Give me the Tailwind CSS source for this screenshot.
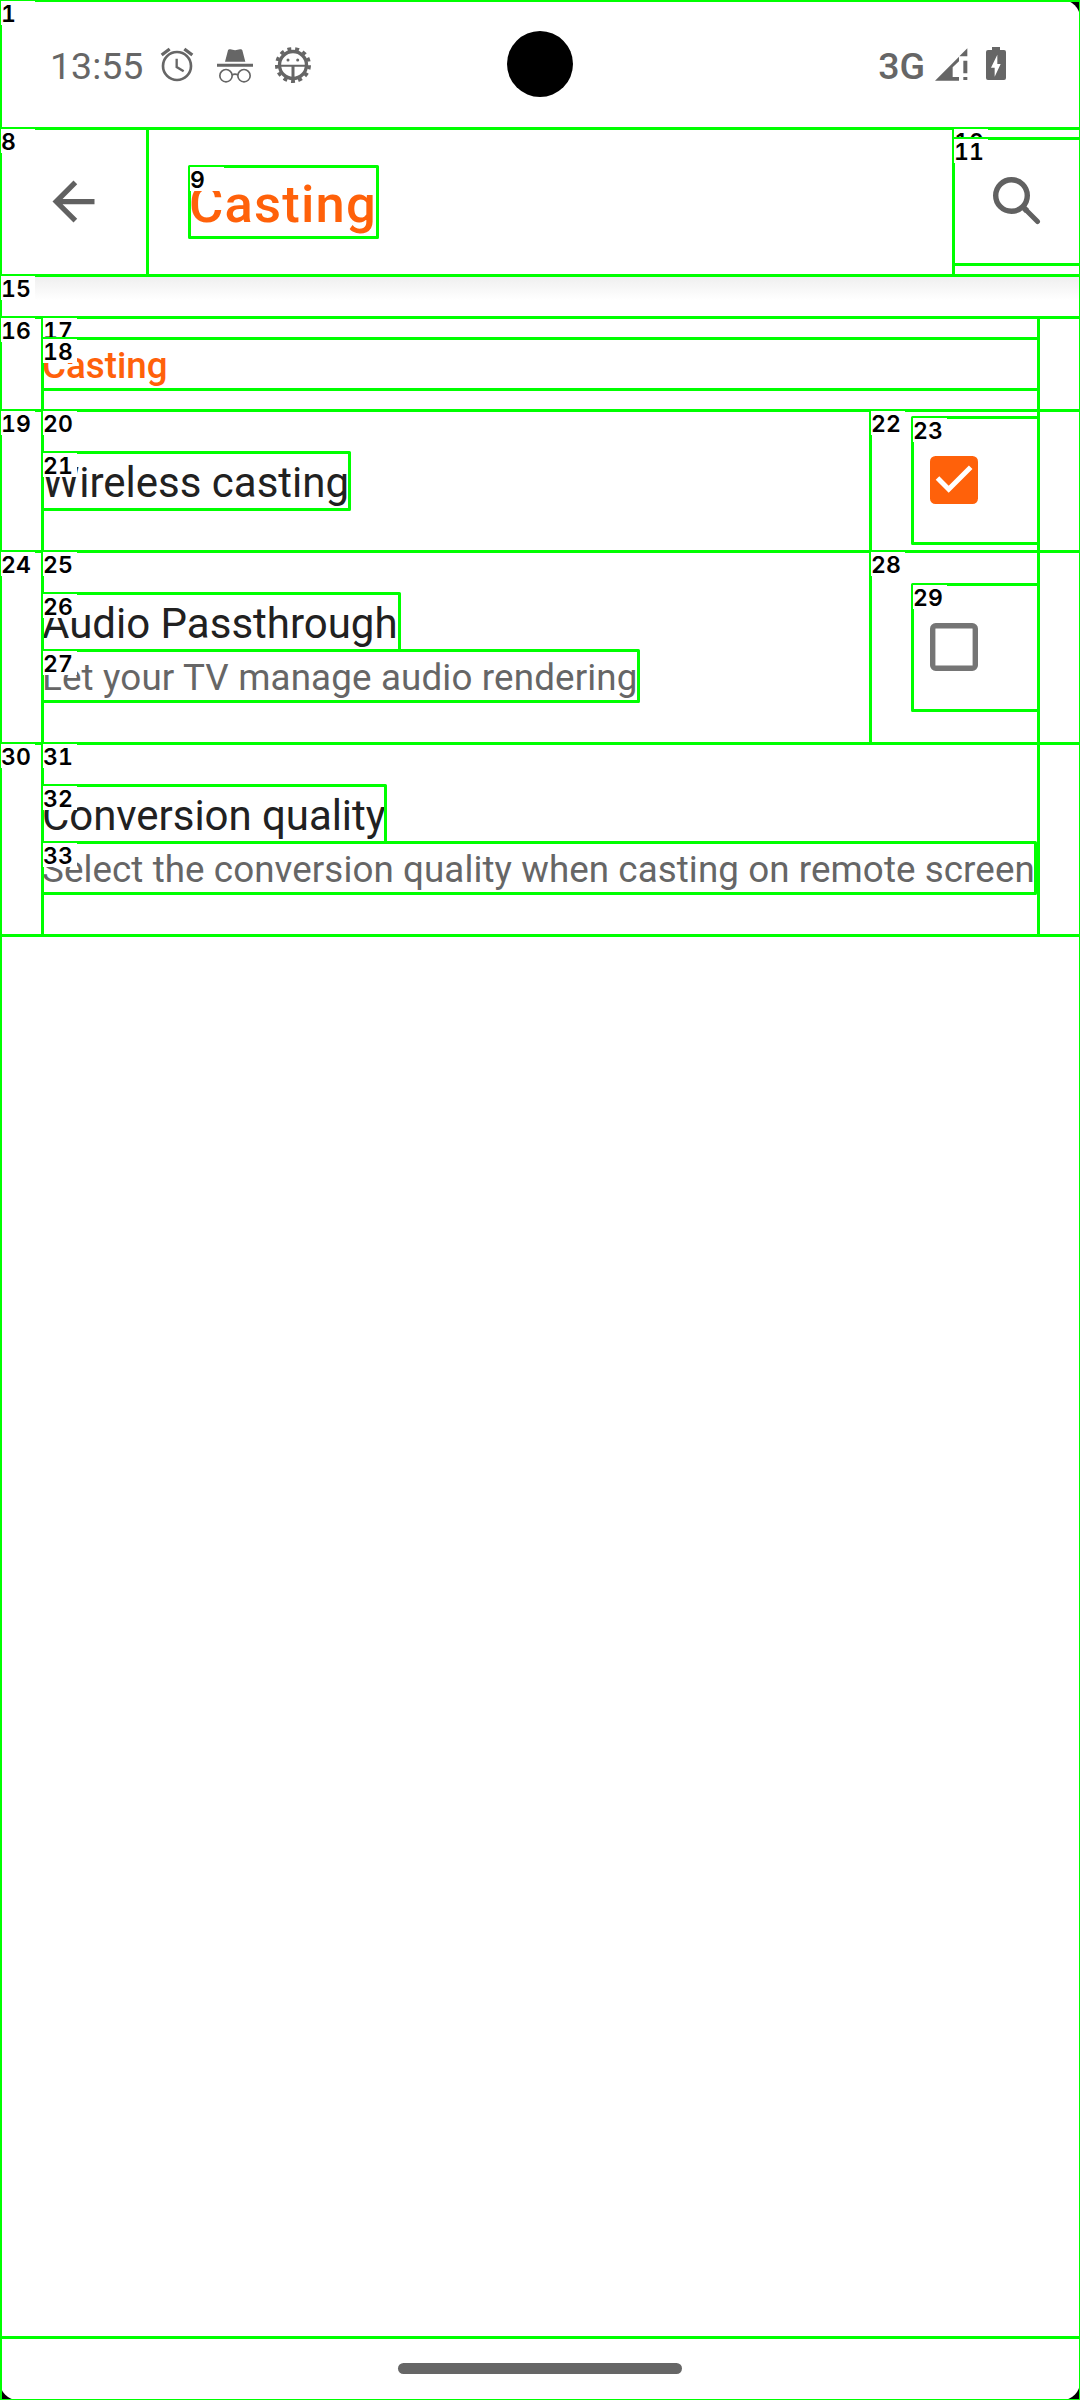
<!DOCTYPE html>
<html lang="en">
<head>
<meta charset="utf-8">
<title>Casting</title>
<script src="https://cdn.jsdelivr.net/npm/@tailwindcss/browser@4"></script>
</head>
<body class="bg-black">
<div class="relative flex flex-col w-[1080px] h-[2400px] overflow-hidden bg-white rounded-[18px] font-[Roboto,sans-serif] text-[#212121]">

  <!-- status bar -->
  <header class="flex h-32 shrink-0 items-center justify-between pl-[50px] pr-[74px] text-[#666666]">
    <div class="flex items-center">
      <span class="text-[37.5px] leading-[44px] mt-1">13:55</span>
      <svg class="ml-[17px] mt-[2px] w-[34px] h-[36px]" viewBox="480 141 102 108" fill="none" stroke="currentColor">
        <circle cx="531" cy="198" r="42" stroke-width="8"/>
        <path d="M530 176v25l21 13" stroke-width="7"/>
        <path d="M485 165l24-18M577 165l-24-18" stroke-width="10"/>
      </svg>
      <svg class="ml-[22px] mt-1 w-[38px] h-[36px]" viewBox="648 144 114 108" fill="currentColor">
        <path d="M675 185l9-34q2-5 7-3 14 5 29 0 5-2 7 3l9 34zM651 191h108v9H651z"/>
        <g fill="none" stroke="currentColor" stroke-width="5"><circle cx="678" cy="227" r="18.500"/><circle cx="732" cy="227" r="18.500"/><path d="M696 225q9-5 18 0"/></g>
      </svg>
      <svg class="ml-[20px] mt-px w-[38px] h-[38px]" viewBox="-57 -57 114 114" fill="currentColor">
        <circle r="40.500" fill="none" stroke="currentColor" stroke-width="10"/>
        <circle r="49" fill="none" stroke="currentColor" stroke-width="10" pathLength="26" stroke-dasharray="1 1" transform="rotate(83.08)"/>
        <path d="M-38 -1h76v6h-76zM-4.500 2h9v36h-9z"/>
        <circle cx="-15" cy="-15" r="4.500"/><circle cx="14" cy="-15" r="4.500"/>
      </svg>
    </div>
    <div class="flex items-center">
      <span class="mt-[3px] text-[37.5px] leading-[44px] font-medium">3G</span>
      <svg class="ml-[10px] w-[33px] h-[33px]" viewBox="284 142 99 99" fill="currentColor">
        <path d="M284 240l72-72v14l-19 18v29h19v11zM381 143v24h-24zM369 180h12v38h-12zM369 229h12v9h-12z"/>
      </svg>
      <svg class="ml-[18px] -mt-px w-[20px] h-[33px]" viewBox="438 141 60 99" fill="currentColor">
        <path fill-rule="evenodd" d="M456 141h24v9h12q6 0 6 6v78q0 6-6 6h-48q-6 0-6-6v-78q0-6 6-6h12zM472 164l-19 39h11v27l18-38h-10z"/>
      </svg>
    </div>
  </header>

  <!-- app bar -->
  <div class="flex h-[147px] shrink-0 items-center pl-[42px] pr-[39px] text-[#616161]">
    <svg class="w-[63px] h-[63px]" viewBox="0 0 24 24" fill="currentColor"><path d="M20 11H7.830l5.590-5.590L12 4l-8 8 8 8 1.410-1.410L7.830 13H20z"/></svg>
    <h1 class="ml-[84px] mt-[5px] text-[52.5px] leading-[76px] font-medium text-[#ff610a] tracking-[1.2px]">Casting</h1>
    <svg class="ml-auto -mt-px w-[48px] h-[48px]" viewBox="0 0 48 48" fill="none" stroke="currentColor" stroke-linecap="round">
      <circle cx="18.500" cy="18.500" r="15.800" stroke-width="5.400"/>
      <path d="M33 33L44.500 44.500" stroke-width="5"/><path d="M31 31L34 34" stroke-width="5.600" stroke-linecap="butt"/>
    </svg>
  </div>

  <!-- preferences -->
  <main class="flex flex-1 flex-col">
    <div class="h-[42px] shrink-0 bg-linear-to-b from-[#eeeeee] to-white to-60%"></div>
    <section class="px-[42px]">
      <div class="h-[93px] pt-[21px]">
        <h2 class="h-[51px] text-[36.75px] leading-[55px] font-medium text-[#ff610a]">Casting</h2>
      </div>
      <div class="flex h-[141px] items-center justify-between">
        <div class="h-[57px] text-[42px] leading-[61px] whitespace-nowrap">Wireless casting</div>
        <svg class="mr-[60px] -mt-px w-[48px] h-[48px]" viewBox="0 0 48 48"><rect width="48" height="48" rx="5.500" fill="#ff610a"/><path d="M7.500 22l11.200 11.200L40.700 11.300" fill="none" stroke="#fff" stroke-width="5"/></svg>
      </div>
      <div class="flex h-[192px] items-center justify-between">
        <div class="flex h-[108px] flex-col whitespace-nowrap">
          <div class="h-[57px] text-[42px] leading-[61px]">Audio Passthrough</div>
          <div class="h-[51px] text-[36.75px] leading-[55px] tracking-[0.15px] text-[#666666]">Let your TV manage audio rendering</div>
        </div>
        <svg class="mr-[60px] w-[48px] h-[48px]" viewBox="0 0 48 48"><rect x="2.700" y="2.700" width="42.600" height="42.600" rx="3" fill="none" stroke="#757575" stroke-width="5.400"/></svg>
      </div>
      <div class="flex h-[192px] items-center">
        <div class="flex h-[108px] flex-col whitespace-nowrap">
          <div class="h-[57px] text-[42px] leading-[61px] tracking-[-0.05px]">Conversion quality</div>
          <div class="h-[51px] text-[36.75px] leading-[55px] tracking-[0.08px] text-[#666666]">Select the conversion quality when casting on remote screen</div>
        </div>
      </div>
    </section>
  </main>

  <!-- gesture bar -->
  <footer class="flex h-[63px] shrink-0 justify-center pt-[26px]">
    <div class="h-[11px] w-[284px] rounded-full bg-[#666666]"></div>
  </footer>

  <!-- camera cutout -->
  <div class="absolute left-[507px] top-[31px] size-[66px] rounded-full bg-black"></div>
</div>

<!-- numbered element bounds -->
<svg id="bounds" class="absolute left-0 top-0 w-[1080px] h-[2400px] font-[Inter,sans-serif] text-[23px] font-semibold tabular-nums" viewBox="0 0 1080 2400"></svg>
<script>
  const boxes = [
    [1, 0, 0, 1080, 2400], [8, 0, 128, 1080, 275], [8, 0, 128, 147, 275], [9, 189, 166, 377, 237],
    [10, 953, 128, 1080, 275], [11, 953, 138, 1080, 264], [15, 0, 275, 1080, 2337],
    [16, 0, 317, 1080, 410], [17, 42, 317, 1038, 410], [18, 42, 338, 1038, 389],
    [19, 0, 410, 1080, 551], [20, 42, 410, 870, 551], [21, 42, 452, 349, 509],
    [22, 870, 410, 1038, 551], [23, 912, 417, 1038, 543],
    [24, 0, 551, 1080, 743], [25, 42, 551, 870, 743], [26, 42, 593, 399, 650], [27, 42, 650, 638, 701],
    [28, 870, 551, 1038, 743], [29, 912, 584, 1038, 710],
    [30, 0, 743, 1080, 935], [31, 42, 743, 1038, 935], [32, 42, 785, 385, 842], [33, 42, 842, 1035, 893]
  ];
  document.getElementById('bounds').innerHTML = boxes.map(([n, x, y, r, b]) =>
    `<rect x="${x + .5}" y="${y + .5}" width="${r - x}" height="${b - y}" fill="none" stroke="#00ff00" stroke-width="3" stroke-linejoin="round"/>` +
    `<rect x="${x + 1}" y="${y + 1}" width="34" height="24" fill="#fff"/>` +
    `<text x="${x + 1}" y="${y + 21.5}">${n}</text>`
  ).join('');
</script>
</body>
</html>
